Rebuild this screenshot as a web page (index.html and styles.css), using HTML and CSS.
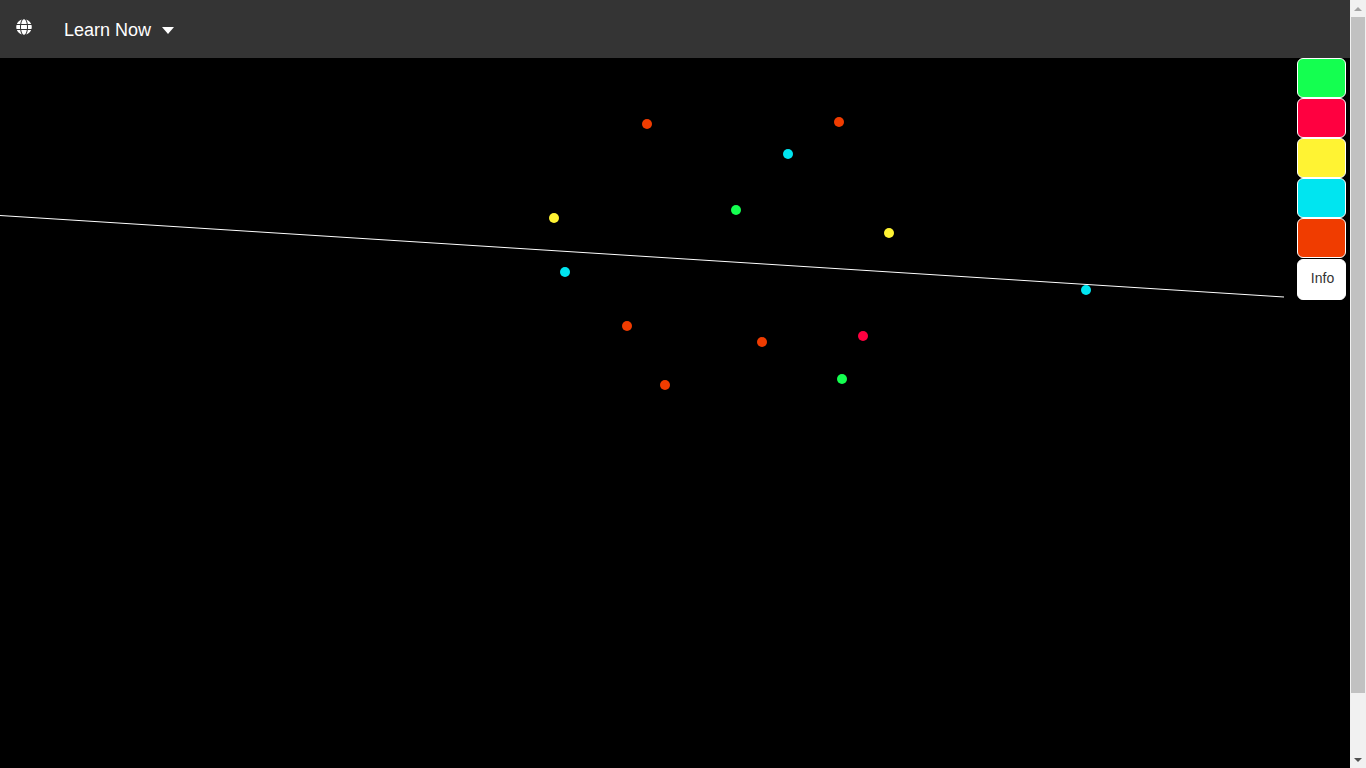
FILE: index.html
```html
<!DOCTYPE html>
<html lang="en">
<head>
<meta charset="UTF-8">
<meta name="viewport" content="width=device-width, initial-scale=1.0">
<title>Learn Now</title>
<link rel="stylesheet" href="styles.css">
</head>
<body>
<div class="page">
<div class="main">
<nav class="navbar">
<svg class="globe" viewBox="0 0 496 512" aria-hidden="true"><path d="M336.5 160C322 70.7 287.8 8 248 8s-74 62.7-88.5 152h177zM152 256c0 22.2 1.2 43.5 3.3 64h185.3c2.1-20.5 3.3-41.8 3.3-64s-1.2-43.5-3.3-64H155.3c-2.1 20.5-3.3 41.8-3.3 64zm324.7-96c-28.6-67.9-86.5-120.4-158-141.6 24.4 33.8 41.2 84.7 50 141.6h108zM177.2 18.4C105.8 39.6 47.8 92.1 19.3 160h108c8.7-56.9 25.5-107.8 49.9-141.6zM487.4 192H372.7c2.1 21 3.3 42.5 3.3 64s-1.2 43-3.3 64h114.6c5.5-20.5 8.6-41.8 8.6-64s-3.1-43.5-8.5-64zM120 256c0-21.5 1.2-43 3.3-64H8.6C3.2 212.5 0 233.8 0 256s3.2 43.5 8.6 64h114.6c-2-21-3.2-42.5-3.2-64zm39.5 96c14.5 89.3 48.7 152 88.5 152s74-62.7 88.5-152h-177zm159.3 141.6c71.4-21.2 129.4-73.7 158-141.6h-108c-8.8 56.9-25.6 107.8-50 141.6zM19.3 352c28.6 67.9 86.5 120.4 158 141.6-24.4-33.8-41.2-84.7-50-141.6h-108z"/></svg>
<a class="nav-link" href="#">Learn Now<span class="caret"></span></a>
</nav>
<div class="stage">
<svg class="plot" width="1350" height="710" viewBox="0 58 1350 710" aria-hidden="true">
<line class="fit-line" x1="0" y1="215.500" x2="1284" y2="297"/>
<circle class="dot orange" cx="647" cy="124" r="5"/>
<circle class="dot orange" cx="839" cy="122" r="5"/>
<circle class="dot cyan" cx="788" cy="154" r="5"/>
<circle class="dot green" cx="736" cy="210" r="5"/>
<circle class="dot yellow" cx="554" cy="218" r="5"/>
<circle class="dot yellow" cx="889" cy="233" r="5"/>
<circle class="dot cyan" cx="565" cy="272" r="5"/>
<circle class="dot cyan" cx="1086" cy="290" r="5"/>
<circle class="dot orange" cx="627" cy="326" r="5"/>
<circle class="dot orange" cx="762" cy="342" r="5"/>
<circle class="dot red" cx="863" cy="336" r="5"/>
<circle class="dot green" cx="842" cy="379" r="5"/>
<circle class="dot orange" cx="665" cy="385" r="5"/>
</svg>
<div class="palette">
<button class="swatch swatch-green" type="button" aria-label="Green"></button>
<button class="swatch swatch-red" type="button" aria-label="Red"></button>
<button class="swatch swatch-yellow" type="button" aria-label="Yellow"></button>
<button class="swatch swatch-cyan" type="button" aria-label="Cyan"></button>
<button class="swatch swatch-orange" type="button" aria-label="Orange"></button>
<button class="swatch swatch-info" type="button">Info</button>
</div>
</div>
</div>
<div class="scrollbar">
<div class="arrow arrow-up"></div>
<div class="track"><div class="thumb"></div></div>
<div class="arrow arrow-down"></div>
</div>
</div>
</body>
</html>
```

FILE: styles.css
```css
html, body {
height: 100%;
margin: 0;
overflow: hidden;
}
body {
font-family: "Liberation Sans", Arial, sans-serif;
background-color: #000;
}
.page {
display: flex;
height: 768px;
}
.main {
flex: 1;
display: flex;
flex-direction: column;
min-width: 0;
}
.navbar {
height: 58px;
flex: none;
display: flex;
align-items: center;
background-color: #343434;
padding: 0 0 4px 16px;
box-sizing: border-box;
}
.globe {
width: 16px;
height: 16px;
fill: #fff;
}
.nav-link {
display: flex;
align-items: center;
margin-left: 32px;
color: #fff;
font-size: 18px;
text-decoration: none;
padding-top: 6px;
}
.caret {
width: 0;
height: 0;
margin-left: 11px;
border-top: 7px solid #fff;
border-left: 6.5px solid transparent;
border-right: 6.5px solid transparent;
}
.stage {
position: relative;
flex: 1;
background-color: #000;
}
.plot {
display: block;
}
.fit-line {
stroke: #fff;
stroke-width: 1;
}
.dot.orange { fill: #f03c00; }
.dot.cyan { fill: #00e5f0; }
.dot.green { fill: #14ff50; }
.dot.yellow { fill: #fff333; }
.dot.red { fill: #ff0040; }
.palette {
position: absolute;
top: 0;
right: 4px;
width: 49px;
display: flex;
flex-direction: column;
}
.swatch {
height: 40px;
padding: 0;
border: 1px solid #fff;
border-radius: 6px;
font-family: inherit;
font-size: 14px;
color: #333;
}
.swatch-green { background-color: #14ff50; }
.swatch-red { background-color: #ff0040; }
.swatch-yellow { background-color: #fff333; }
.swatch-cyan { background-color: #00e5f0; }
.swatch-orange { background-color: #f03c00; }
.swatch-info {
height: 41px;
margin-top: 1px;
background-color: #fff;
padding: 0 0 4px 2px;
}
.scrollbar {
width: 16px;
flex: none;
display: flex;
flex-direction: column;
background-color: #f1f1f1;
}
.arrow {
height: 17px;
flex: none;
display: flex;
align-items: center;
justify-content: center;
}
.arrow-up::before,
.arrow-down::before {
content: "";
border-left: 4px solid transparent;
border-right: 4px solid transparent;
}
.arrow-up::before {
border-bottom: 4px solid #a3a3a3;
}
.arrow-down::before {
border-top: 4px solid #505050;
}
.track {
flex: 1;
}
.thumb {
height: 676px;
background-color: #c1c1c1;
margin: 0 1px;
}
```
